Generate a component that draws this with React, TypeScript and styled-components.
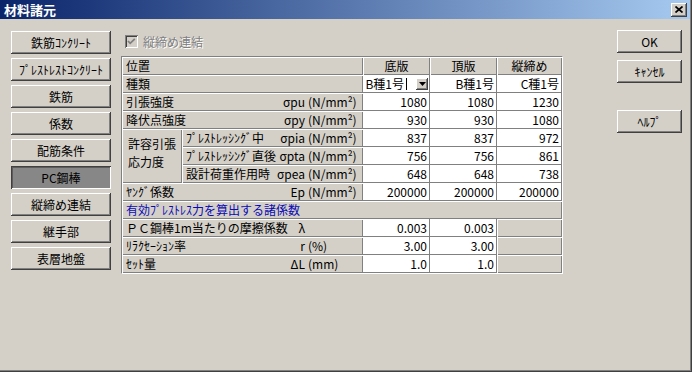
import React from 'react';
import styled, { createGlobalStyle, css } from 'styled-components';

const GlobalStyle = createGlobalStyle`
  html, body {
    margin: 0;
    padding: 0;
    background: #d4d0c8;
  }
  body {
    font-family: "Noto Sans CJK JP", "Noto Sans", sans-serif;
    font-size: 12px;
    color: #000;
  }
`;

const raised = css`
  background: #d4d0c8;
  box-shadow: inset -1px -1px #404040, inset 1px 1px #fff, inset -2px -2px #808080;
`;

const Window = styled.div`
  width: 692px;
  height: 372px;
  box-sizing: border-box;
  display: flex;
  flex-direction: column;
  padding: 0 2px 2px 0;
  background: #d4d0c8;
  box-shadow: inset -1px -1px #404040, inset -2px -2px #808080;
`;

const TitleBar = styled.div`
  height: 19px;
  display: flex;
  align-items: center;
  padding-left: 4px;
  background: linear-gradient(to right, #0a246a, #a6caf0);
  color: #fff;
  font-weight: bold;
  font-size: 13px;
  line-height: 19px;
`;

const CloseButton = styled.button`
  ${raised};
  margin-left: auto;
  margin-right: 3px;
  width: 16px;
  height: 14px;
  padding: 0;
  border: 0;
  display: flex;
  align-items: center;
  justify-content: center;
`;

const Body = styled.div`
  flex: 1;
  display: flex;
  padding: 12px 8px 0 11px;
`;

const Nav = styled.div`
  width: 100px;
  display: flex;
  flex-direction: column;
  gap: 4px;
`;

const Button = styled.button<{ $pressed?: boolean }>`
  ${raised};
  height: 23px;
  border: 0;
  padding: 0;
  font-family: inherit;
  font-size: 12px;
  line-height: 23px;
  color: #000;
  white-space: nowrap;
  ${props => props.$pressed && css`
    background: #878787;
    box-shadow: inset 1px 1px #404040, inset -1px -1px #fff, inset 2px 2px #5c5c5c;
  `}
`;

const Middle = styled.div`
  width: 442px;
  margin-left: 10px;
  padding-top: 4px;
  display: flex;
  flex-direction: column;
`;

const CheckRow = styled.label`
  height: 13px;
  display: flex;
  align-items: center;
  gap: 5px;
  margin-left: 4px;
  margin-bottom: 8px;
  color: #808080;
  text-shadow: 1px 1px #fff;
  line-height: 13px;
`;

const CheckBox = styled.span`
  width: 13px;
  height: 13px;
  box-sizing: border-box;
  background: #d4d0c8;
  box-shadow: inset 1px 1px #808080, inset -1px -1px #fff, inset 2px 2px #404040, inset -2px -2px #d4d0c8;
  display: flex;
`;

const Frame = styled.div`
  border: 1px solid;
  border-color: #808080 #fff #fff #808080;
`;

const Grid = styled.div`
  display: grid;
  grid-template-columns: 60px 181px 67px 67px 65px;
  grid-auto-rows: 18px;
  line-height: 18px;
`;

const Label = styled.div<{ $span?: number; $blue?: boolean; $center?: boolean }>`
  grid-column: span ${props => props.$span || 1};
  background: #d4d0c8;
  box-shadow: inset 1px 1px #fff, inset -1px -1px #808080;
  padding: 0 4px;
  display: flex;
  align-items: center;
  justify-content: ${props => (props.$center ? 'center' : 'flex-start')};
  white-space: nowrap;
  overflow: hidden;
  color: ${props => (props.$blue ? '#0a0ab4' : '#000')};
`;

const GroupLabel = styled.div`
  grid-row: span 3;
  background: #d4d0c8;
  box-shadow: inset 1px 1px #fff, inset -1px -1px #808080;
  padding: 6px 4px 0 6px;
  white-space: nowrap;
`;

const Name = styled.span`
  flex: 1;
`;

const Sym = styled.span`
  margin-right: 3px;
`;

const Unit = styled.span`
  width: 51px;
`;

const Value = styled.div`
  background: #fff;
  border-right: 1px solid #808080;
  border-bottom: 1px solid #808080;
  padding-right: 2px;
  text-align: right;
  white-space: nowrap;
`;

const Blank = styled.div`
  background: #d4d0c8;
  box-shadow: inset 1px 1px #fff, inset -1px -1px #808080;
`;

const Combo = styled.div`
  background: #fff;
  border-right: 1px solid #808080;
  border-bottom: 1px solid #808080;
  display: flex;
  align-items: center;
  justify-content: flex-end;
  padding-right: 1px;
`;

const Caret = styled.span`
  width: 1px;
  height: 12px;
  background: #000;
  margin-left: 2px;
  margin-right: 9px;
`;

const DropButton = styled.span`
  ${raised};
  width: 12px;
  height: 12px;
  display: flex;
  align-items: center;
  justify-content: center;
`;

const Side = styled.div`
  width: 65px;
  margin-left: auto;
  margin-top: -1px;
  display: flex;
  flex-direction: column;
  gap: 7px;
`;

const SideButton = styled(Button)<{ $gap?: number }>`
  margin-top: ${props => props.$gap || 0}px;
`;

type Row = { name: string; sym: string; unit: string; values: string[] };

const strength: Row[] = [
  { name: '引張強度', sym: 'σpu', unit: '(N/mm²)', values: ['1080', '1080', '1230'] },
  { name: '降伏点強度', sym: 'σpy', unit: '(N/mm²)', values: ['930', '930', '1080'] },
];

const allowable: Row[] = [
  { name: 'ﾌﾟﾚｽﾄﾚｯｼﾝｸﾞ中', sym: 'σpia', unit: '(N/mm²)', values: ['837', '837', '972'] },
  { name: 'ﾌﾟﾚｽﾄﾚｯｼﾝｸﾞ直後', sym: 'σpta', unit: '(N/mm²)', values: ['756', '756', '861'] },
  { name: '設計荷重作用時', sym: 'σpea', unit: '(N/mm²)', values: ['648', '648', '738'] },
];

const coefficients: Row[] = [
  { name: 'ＰＣ鋼棒1m当たりの摩擦係数', sym: 'λ', unit: '', values: ['0.003', '0.003'] },
  { name: 'ﾘﾗｸｾｰｼｮﾝ率', sym: 'r', unit: '(%)', values: ['3.00', '3.00'] },
  { name: 'ｾｯﾄ量', sym: 'ΔL', unit: '(mm)', values: ['1.0', '1.0'] },
];

const navItems = ['鉄筋ｺﾝｸﾘｰﾄ', 'ﾌﾟﾚｽﾄﾚｽﾄｺﾝｸﾘｰﾄ', '鉄筋', '係数', '配筋条件', 'PC鋼棒', '縦締め連結', '継手部', '表層地盤'];

function LabelText({ row, span }: { row: Row; span?: number }) {
  return (
    <Label $span={span}>
      <Name>{row.name}</Name>
      <Sym>{row.sym}</Sym>
      <Unit>{row.unit}</Unit>
    </Label>
  );
}

export default function App() {
  return (
    <>
      <GlobalStyle />
      <Window>
        <TitleBar>
          材料諸元
          <CloseButton>
            <svg width="8" height="7" viewBox="0 0 8 7">
              <path d="M0.5 0.5 L7.5 6.5 M7.5 0.5 L0.5 6.5" stroke="#000" strokeWidth="1.7" />
            </svg>
          </CloseButton>
        </TitleBar>
        <Body>
          <Nav>
            {navItems.map(item => (
              <Button key={item} $pressed={item === 'PC鋼棒'}>{item}</Button>
            ))}
          </Nav>
          <Middle>
            <CheckRow>
              <CheckBox>
                <svg width="13" height="13" viewBox="0 0 13 13">
                  <polyline points="3,6 5.2,8.3 9.8,3.8" fill="none" stroke="#808080" strokeWidth="1.8" />
                </svg>
              </CheckBox>
              縦締め連結
            </CheckRow>
            <Frame>
              <Grid>
                <Label $span={2}>位置</Label>
                <Label $center>底版</Label>
                <Label $center>頂版</Label>
                <Label $center>縦締め</Label>

                <Label $span={2}>種類</Label>
                <Combo>
                  B種1号
                  <Caret />
                  <DropButton>
                    <svg width="7" height="4" viewBox="0 0 7 4">
                      <polygon points="0,0 7,0 3.5,4" fill="#000" />
                    </svg>
                  </DropButton>
                </Combo>
                <Value>B種1号</Value>
                <Value>C種1号</Value>

                {strength.map(row => (
                  <React.Fragment key={row.name}>
                    <LabelText row={row} span={2} />
                    {row.values.map((v, i) => <Value key={i}>{v}</Value>)}
                  </React.Fragment>
                ))}

                <GroupLabel>
                  許容引張<br />応力度
                </GroupLabel>
                {allowable.map(row => (
                  <React.Fragment key={row.name}>
                    <LabelText row={row} />
                    {row.values.map((v, i) => <Value key={i}>{v}</Value>)}
                  </React.Fragment>
                ))}

                <LabelText row={{ name: 'ﾔﾝｸﾞ係数', sym: 'Ep', unit: '(N/mm²)', values: [] }} span={2} />
                <Value>200000</Value>
                <Value>200000</Value>
                <Value>200000</Value>

                <Label $span={5} $blue>有効ﾌﾟﾚｽﾄﾚｽ力を算出する諸係数</Label>

                {coefficients.map(row => (
                  <React.Fragment key={row.name}>
                    <LabelText row={row} span={2} />
                    {row.values.map((v, i) => <Value key={i}>{v}</Value>)}
                    <Blank />
                  </React.Fragment>
                ))}
              </Grid>
            </Frame>
          </Middle>
          <Side>
            <SideButton>OK</SideButton>
            <SideButton>ｷｬﾝｾﾙ</SideButton>
            <SideButton $gap={20}>ﾍﾙﾌﾟ</SideButton>
          </Side>
        </Body>
      </Window>
    </>
  );
}
